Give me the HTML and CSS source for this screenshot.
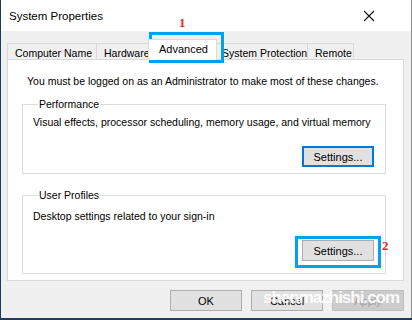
FILE: index.html
```html
<!DOCTYPE html>
<html lang="en">
<head>
    <meta charset="UTF-8">
    <meta name="viewport" content="width=device-width, initial-scale=1.0">
    <title>System Properties</title>
    <link rel="stylesheet" href="styles.css">
</head>
<body>

    <div class="window">
        <div class="titlebar">
            <span class="title">System Properties</span>
            <svg class="close" width="12" height="12" viewBox="0 0 12 12">
                <path d="M1 1 L11 11 M11 1 L1 11" stroke="#111" stroke-width="1.1" fill="none"/>
            </svg>
        </div>

        <div class="tabs">
            <div class="tab" style="width: 90px">Computer Name</div>
            <div class="tab" style="width: 55px">Hardware</div>
            <div class="tab selected" style="width: 69px">Advanced</div>
            <div class="tab" style="width: 94px">System Protection</div>
            <div class="tab" style="width: 47px">Remote</div>
        </div>

        <div class="panel">
            <p class="notice">You must be logged on as an Administrator to make most of these changes.</p>

            <fieldset class="group group-perf">
                <legend>Performance</legend>
                <p class="desc">Visual effects, processor scheduling, memory usage, and virtual memory</p>
                <div class="group-actions">
                    <button class="button default">Settings...</button>
                </div>
            </fieldset>

            <fieldset class="group group-profiles">
                <legend>User Profiles</legend>
                <p class="desc">Desktop settings related to your sign-in</p>
                <div class="group-actions">
                    <button class="button">Settings...</button>
                </div>
            </fieldset>
        </div>

        <div class="footer">
            <button class="button">OK</button>
            <button class="button">Cancel</button>
            <button class="button" disabled>Apply</button>
        </div>

        <!-- tutorial markers drawn over the dialog -->
        <div class="mark mark-tab"></div>
        <span class="num num-1">1</span>
        <div class="mark mark-btn"></div>
        <span class="num num-2">2</span>
        <span class="watermark">shenmazhishi.com</span>
    </div>

</body>
</html>
```

FILE: styles.css
```css
body {
    margin: 0;
    background-color: #1d3b5c;
    font-family: "Liberation Sans", Arial, sans-serif;
    font-size: 10.5px;
    color: #000;
}

.window {
    position: relative;
    width: 412px;
    height: 318px;
    box-sizing: border-box;
    overflow: hidden;
    background-color: #f0f0f0;
    border-left: 1px solid #1d3b5c;
    border-right: 1px solid #8c8c8c;
}

.titlebar {
    height: 31px;
    background-color: #fff;
    display: flex;
    align-items: center;
    justify-content: space-between;
    padding: 0 36px 0 8px;
}

.title {
    font-size: 11.5px;
}

.tabs {
    display: flex;
    margin: 11px 0 0 6px;
    height: 17px;
    align-items: flex-end;
}

.tab {
    height: 16px;
    box-sizing: border-box;
    border: 1px solid #d9d9d9;
    border-bottom: none;
    margin-left: -1px;
    padding: 3px 0 0 7px;
    white-space: nowrap;
    overflow: hidden;
    background-color: #f0f0f0;
}

.tab:first-child {
    margin-left: 0;
}

.tab.selected {
    position: relative;
    z-index: 1;
    height: 21px;
    margin: 0 -2px -1px -3px;
    padding: 3px 0 0 10px;
    background-color: #fff;
    font-size: 11px;
}

.panel {
    margin: 0 7px 0 6px;
    height: 222px;
    box-sizing: border-box;
    background-color: #fff;
    border: 1px solid #d9d9d9;
    padding: 15px 17px 0 14px;
}

.notice {
    margin: 0 0 11px 5px;
}

.desc {
    margin: 6px 0 0 1px;
}

.group {
    border: 1px solid #dcdcdc;
    margin: 0;
    padding: 0 11px 0 9px;
}

.group legend {
    padding: 0 1px;
    margin-left: 6px;
}

.group-perf {
    height: 74px;
    margin-bottom: 15px;
}

.group-profiles {
    height: 83px;
}

.group-profiles .desc {
    margin-top: 9px;
}

.group-actions {
    display: flex;
    justify-content: flex-end;
    margin-top: 18px;
}

.button {
    width: 72px;
    height: 21px;
    box-sizing: border-box;
    background-color: #e1e1e1;
    border: 1px solid #adadad;
    font-family: inherit;
    font-size: 11px;
    color: #000;
    padding: 0;
}

.button.default {
    border: 2px solid #0078d7;
}

.button:disabled {
    color: #a0a0a0;
    background-color: #cccccc;
    border-color: #bfbfbf;
}

.footer {
    display: flex;
    justify-content: flex-end;
    gap: 9px;
    margin: 9px 7px 0 0;
}

.mark {
    position: absolute;
    border: 3px solid #00a2e8;
    box-sizing: border-box;
}

.mark-tab {
    left: 148px;
    top: 32px;
    width: 75px;
    height: 31px;
}

.mark-btn {
    left: 294px;
    top: 236px;
    width: 86px;
    height: 32px;
}

.num {
    position: absolute;
    font-family: "Liberation Serif", serif;
    font-weight: bold;
    font-size: 13px;
    color: #e8242b;
}

.num-1 {
    left: 178px;
    top: 15px;
}

.num-2 {
    left: 381px;
    top: 238px;
}

.watermark {
    position: absolute;
    left: 262px;
    top: 288px;
    white-space: nowrap;
    font-family: "Liberation Sans", Arial, sans-serif;
    font-weight: bold;
    font-size: 17px;
    letter-spacing: -1px;
    color: #fff;
    opacity: 0.92;
}
```
